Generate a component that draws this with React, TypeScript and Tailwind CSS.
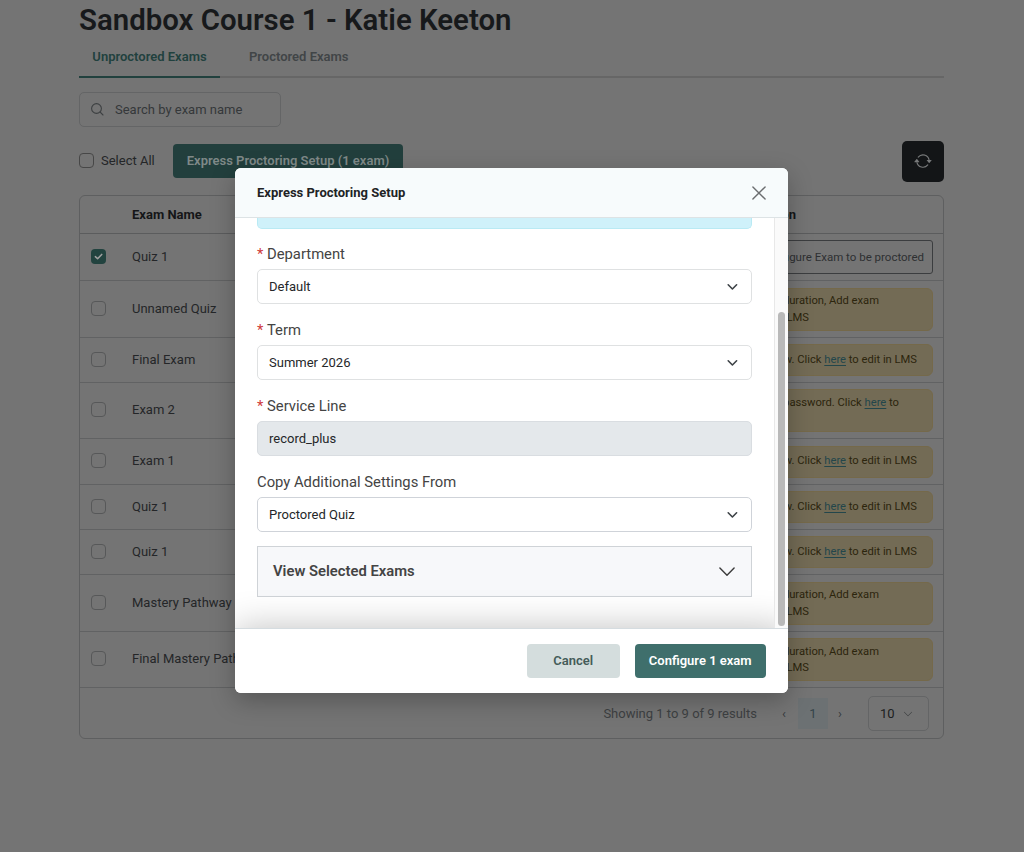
import React from "react";
import { BsArrowRepeat, BsChevronDown } from "react-icons/bs";

type Note = "configure" | "duration" | "window" | "password";

const exams: { name: string; height: string; note: Note }[] = [
  { name: "Quiz 1", height: "h-[47px]", note: "configure" },
  { name: "Unnamed Quiz", height: "h-[57px]", note: "duration" },
  { name: "Final Exam", height: "h-[45px]", note: "window" },
  { name: "Exam 2", height: "h-[56px]", note: "password" },
  { name: "Exam 1", height: "h-[46px]", note: "window" },
  { name: "Quiz 1", height: "h-[45px]", note: "window" },
  { name: "Quiz 1", height: "h-[45px]", note: "window" },
  { name: "Mastery Pathway", height: "h-[57px]", note: "duration" },
  { name: "Final Mastery Pathway", height: "h-[56px]", note: "duration" },
];

function Checkbox({ checked = false, strong = false }: { checked?: boolean; strong?: boolean }) {
  if (checked) {
    return (
      <span className="flex size-[15px] shrink-0 items-center justify-center rounded-[4px] bg-[#22433f]">
        <svg viewBox="0 0 10 10" className="size-[9px]" fill="none" stroke="#a0a0a0" strokeWidth="1.7" strokeLinecap="round" strokeLinejoin="round">
          <path d="M1.5 5.2 4 7.5 8.6 2.7" />
        </svg>
      </span>
    );
  }
  return (
    <span
      className={
        strong
          ? "size-[15px] shrink-0 rounded-[4px] border border-[#474747]"
          : "size-[15px] shrink-0 rounded-[4px] border border-[#575859]"
      }
    />
  );
}

function Here() {
  return <span className="text-[#23464b] underline underline-offset-2">here</span>;
}

function Action({ note }: { note: Note }) {
  if (note === "configure") {
    return (
      <div className="flex h-[34px] items-center justify-end rounded-[3px] border border-[#3b3d3f] pt-px pr-[8px] text-[11.5px] text-[#2e3032]">
        Configure Exam to be proctored
      </div>
    );
  }
  if (note === "window") {
    return (
      <div className="flex h-8 items-center justify-end rounded-[6px] border border-[#75694a] bg-[#736b55] pr-[15px] text-[11.2px] text-[#2c250d]">
        <span>
          Add exam window. Click <Here /> to edit in LMS
        </span>
      </div>
    );
  }
  if (note === "password") {
    return (
      <div className="flex h-[43px] justify-end rounded-[6px] border border-[#75694a] bg-[#736b55] pt-[4px] pr-[33px] text-[11.2px] leading-[17px] text-[#2c250d]">
        <span>
          Add exam password. Click <Here /> to
        </span>
      </div>
    );
  }
  return (
    <div className="flex h-[43px] flex-col rounded-[6px] border border-[#75694a] bg-[#736b55] pt-[4.5px] text-[11.2px] leading-[16.5px] text-[#2c250d]">
      <span className="pr-[53px] text-right">Add exam duration, Add exam</span>
      <span className="pr-[123px] text-right">in LMS</span>
    </div>
  );
}

function Field({ label, value, required = true, disabled = false }: { label: string; value: string; required?: boolean; disabled?: boolean }) {
  return (
    <div className="h-[76px]">
      <div className="flex h-[25px] items-center text-[14.8px] leading-[20px] text-[#444444]">
        {required && <span className="mr-1 w-[6px] text-[#cf3b3b]">*</span>}
        {label}
      </div>
      <div
        className={
          disabled
            ? "mt-[3px] flex h-[35px] items-center justify-between rounded-[5px] border border-[#d9dde1] bg-[#e4e8eb] px-[11px]"
            : required
              ? "mt-[3px] flex h-[35px] items-center justify-between rounded-[5px] border border-[#dfe1e2] bg-white px-[11px]"
              : "mt-[3px] flex h-[35px] items-center justify-between rounded-[5px] border border-[#cfd3d9] bg-white px-[11px]"
        }
      >
        <span className="text-[13px] text-[#252729]">{value}</span>
        {!disabled && (
          <svg viewBox="0 0 12 8" className="mr-[2px] h-[8px] w-[12px]" fill="none" stroke="#3d4246" strokeWidth="1.6" strokeLinecap="round" strokeLinejoin="round">
            <path d="M2.2 1.8 6.4 6 10.6 1.8" />
          </svg>
        )}
      </div>
    </div>
  );
}

function Modal() {
  return (
    <section className="absolute top-[168px] left-[235px] flex h-[525px] w-[553px] flex-col overflow-hidden rounded-[6px] bg-white">
      <header className="flex h-[50px] shrink-0 items-center justify-between border-b border-[#dde3e5] bg-[#f7fbfc] pr-[22px] pl-[22px]">
        <h2 className="text-[13px] font-bold text-[#212325]">Express Proctoring Setup</h2>
        <svg viewBox="0 0 14 14" className="size-[14px]" fill="none" stroke="#6b6d6f" strokeWidth="1.4" strokeLinecap="round">
          <path d="M.9.9 13.1 13.1M13.1.9.9 13.1" />
        </svg>
      </header>
      <div className="flex h-[410px] shrink-0">
        <div className="relative flex-1 overflow-hidden pr-[22px] pl-[22px]">
          <div className="h-[11px] rounded-b-[5px] border border-t-0 border-[#b9eaf4] bg-[#cff1fa]" />
          <div className="pt-[12px]">
            <Field label="Department" value="Default" />
            <Field label="Term" value="Summer 2026" />
            <Field label="Service Line" value="record_plus" disabled />
            <Field label="Copy Additional Settings From" value="Proctored Quiz" required={false} />
          </div>
          <div className="mt-[1px] flex h-[51px] items-center justify-between border border-[#cfd3d7] bg-[#f7f8fa] pr-[16px] pl-[15px]">
            <span className="text-[14.8px] font-semibold text-[#444444]">View Selected Exams</span>
            <svg viewBox="0 0 16 10" className="h-[10px] w-[16px]" fill="none" stroke="#3b3b3b" strokeWidth="1.4" strokeLinecap="round" strokeLinejoin="round">
              <path d="M.9 1 8 8.3 15.1 1" />
            </svg>
          </div>
          <div className="absolute -right-[14px] -bottom-[60px] left-0 h-[60px] shadow-[0_0_36px_rgba(0,0,0,0.25)]" />
        </div>
        <div className="relative flex w-[14px] flex-col items-center justify-end border-l border-[#e8e8e8] bg-[#fafafa] pb-[2px]">
          <div className="h-[314px] w-[7px] rounded-full bg-[#b9b9b9]" />
        </div>
      </div>
      <footer className="relative flex flex-1 items-center justify-end gap-[15px] border-t border-[#d5dce0] bg-white pr-[22px]">
        <button className="h-[34px] w-[92.5px] rounded-[4px] bg-[#d4dddd] text-[13px] font-semibold text-[#445b59]">Cancel</button>
        <button className="h-[34px] w-[131.5px] rounded-[4px] bg-[#3f6f6c] text-[13px] font-semibold text-white">Configure 1 exam</button>
      </footer>
    </section>
  );
}

export default function App() {
  return (
    <main className="relative h-[852px] w-[1024px] overflow-hidden bg-[#747474] font-['Roboto',sans-serif] text-[#242628]">
      <div className="ml-[79px] w-[865px]">
        <h1 className="h-[41px] text-[29.4px] leading-[40px] font-semibold text-[#17191b]">Sandbox Course 1 - Katie Keeton</h1>
        <nav className="flex h-[37px] border-b-2 border-[#666666] text-[13px] font-semibold">
          <div className="h-[37px] w-[141px] border-b-2 border-[#21413e] pt-[6px] text-center text-[#21413e]">Unproctored Exams</div>
          <div className="ml-[29px] pt-[6px] text-[#414547]">Proctored Exams</div>
        </nav>
        <div className="mt-[14px] flex h-[35px] w-[202px] items-center rounded-[5px] border border-[#646566] pl-[11px] text-[13px] text-[#35383a]">
          <svg viewBox="0 0 13 13" className="mr-[11px] size-[13px]" fill="none" stroke="#3d4042" strokeWidth="1.1" strokeLinecap="round">
            <circle cx="5.5" cy="5.5" r="4.9" />
            <path d="m9.2 9.2 2.8 2.8" />
          </svg>
          Search by exam name
        </div>
        <div className="mt-[13px] flex h-[42px] items-center">
          <span className="-mt-[2px] flex">
            <Checkbox strong />
          </span>
          <span className="-mt-[1px] ml-[7px] w-[54px] text-[13px] whitespace-nowrap">Select All</span>
          <button className="ml-[18px] h-[34px] w-[230px] rounded-[4px] bg-[#223f3d] text-[13px] font-semibold text-[#7f8988]">Express Proctoring Setup (1 exam)</button>
          <button className="ml-auto flex h-[41px] w-[42px] items-center justify-center rounded-[5px] bg-[#131517] text-[#77797a]">
            <BsArrowRepeat className="size-[18px]" />
          </button>
        </div>

        <section className="mt-[13px] h-[544px] rounded-[6px] border border-[#5e5f60]">
          <div className="flex h-[38px] items-center border-b border-[#5b5c5d] text-[13px] font-bold text-[#141618]">
            <span className="ml-[52px]">Exam Name</span>
            <span className="ml-auto pr-[147px] text-right">Action</span>
          </div>
          {exams.map((exam, index) => (
            <div key={index} className={`flex items-center border-b border-[#616263] ${exam.height}`}>
              <span className="-mt-[2px] ml-[11px] flex w-[41px]">
                <Checkbox checked={index === 0} />
              </span>
              <span className="-mt-[1px] text-[13px]">{exam.name}</span>
              <div className="mr-[10px] ml-auto w-[250px]">
                <Action note={exam.note} />
              </div>
            </div>
          ))}
          <div className="flex h-[51px] items-center justify-end pr-[14px] text-[13px]">
            <span className="text-[#3d4042]">Showing 1 to 9 of 9 results</span>
            <span className="ml-[25px] w-[6px] text-[#34393c]">‹</span>
            <span className="ml-[10px] flex h-[31px] w-[30px] items-center justify-center bg-[#6c7173] text-[#34444a]">1</span>
            <span className="ml-[10px] w-[6px] text-[#34393c]">›</span>
            <div className="ml-[24px] flex h-[35px] w-[61px] items-center rounded-[5px] border border-[#646566] pl-[11px] text-[13px] text-[#1c1e20]">
              10
              <BsChevronDown className="ml-[8px] size-[10px] text-[#35383a]" />
            </div>
          </div>
        </section>
      </div>
      <div className="pointer-events-none absolute top-[168px] left-[235px] h-[525px] w-[553px] rounded-[6px] shadow-[0_8px_24px_rgba(0,0,0,0.25)]" />
      <Modal />
    </main>
  );
}
